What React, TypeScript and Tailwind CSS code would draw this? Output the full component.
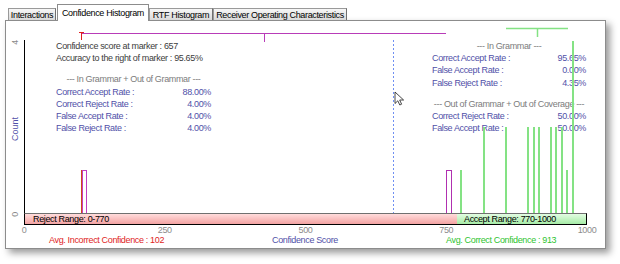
import React from 'react';

// [x in plot px, count]
const correctBars: [number, number][] = [
  [437, 1], [460, 2], [482, 2], [504, 2], [510, 2], [515, 2],
  [527, 2], [532, 2], [538, 2], [543, 1], [549, 4],
];

const BASE = 192;
const UNIT = 43;

function Tab({ label, width }: { label: string; width: string }) {
  return (
    <div
      className={`${width} h-[12px] flex items-center justify-center border border-b-0 border-[#9a9a9a] border-r-[#6f6f6f] bg-linear-to-b from-[#f7f7f7] to-[#d9d9d9] leading-[10px] whitespace-nowrap`}
    >
      {label}
    </div>
  );
}

function Row({ label, value }: { label: string; value: string }) {
  return (
    <div className="flex justify-between text-[#5050a8]">
      <span>{label}</span>
      <span>{value}</span>
    </div>
  );
}

function Chart() {
  return (
    <svg className="absolute inset-0" width={563} height={192} viewBox="0 0 563 192">
      <line x1={0.5} y1={19} x2={0.5} y2={192} stroke="#000" />
      <line x1={369.5} y1={19} x2={369.5} y2={192} stroke="#6f8ff2" strokeDasharray="2 2" />

      {/* incorrect confidence spread */}
      <line x1={58} y1={12.5} x2={422} y2={12.5} stroke="#b83cb8" />
      <line x1={240.5} y1={12.5} x2={240.5} y2={21} stroke="#b83cb8" />
      <line x1={55} y1={11.5} x2={60} y2={11.5} stroke="#e02020" />
      <line x1={57.5} y1={11} x2={57.5} y2={19} stroke="#e02020" />

      {/* correct confidence spread */}
      <line x1={482} y1={7.5} x2={544} y2={7.5} stroke="#84e284" strokeWidth={1.5} />
      <line x1={513.5} y1={7.5} x2={513.5} y2={16} stroke="#84e284" strokeWidth={1.5} />

      {/* incorrect bars */}
      <line x1={57.5} y1={BASE - UNIT} x2={57.5} y2={BASE} stroke="#d0481a" />
      <rect x={58.5} y={BASE - UNIT + 0.5} width={4} height={UNIT} fill="none" stroke="#c23ec2" />
      <rect x={422.5} y={BASE - UNIT + 0.5} width={5} height={UNIT} fill="none" stroke="#b030b0" />

      {/* correct bars */}
      {correctBars.map(([x, c]) => (
        <rect key={x} x={x - 1} y={BASE - c * UNIT} width={2} height={c * UNIT} fill="#84e284" />
      ))}

      {/* mouse cursor */}
      <polygon
        transform="translate(371 71)"
        points="0,0 0,11.5 2.8,8.8 4.8,13 6.6,12.2 4.7,8 8.6,8"
        fill="#fff"
        stroke="#1a1a1a"
        strokeWidth={0.8}
        strokeLinejoin="round"
      />
    </svg>
  );
}

export default function App() {
  return (
    <div className="w-[620px] h-[264px] bg-white overflow-hidden text-[9px] tracking-[-0.35px] text-black [font-family:'Liberation_Sans',Arial,sans-serif]">
      <div className="flex items-end h-[20px] pl-[8px]">
        <Tab label="Interactions" width="w-[48px]" />
        <div className="ml-[1px] w-[92px] h-[17px] -mb-px relative z-10 bg-white border border-b-0 border-[#8c8c8c] flex justify-center pt-[3px] leading-[10px] whitespace-nowrap">
          Confidence Histogram
        </div>
        <Tab label="RTF Histogram" width="w-[64px]" />
        <Tab label="Receiver Operating Characteristics" width="w-[134px]" />
      </div>

      <div className="ml-[5px] w-[601px] h-[229px] border border-[#8c8c8c] bg-white shadow-[4px_4px_7px_rgba(0,0,0,0.4)] flex">
        {/* y axis */}
        <div className="w-[18px] flex flex-col items-center leading-[10px]">
          <span className="mt-[19px] [writing-mode:vertical-rl] rotate-180 text-[#8a8a8a]">4</span>
          <span className="mt-[72px] [writing-mode:vertical-rl] rotate-180 text-[#5050a8] tracking-normal">Count</span>
          <span className="mt-[71px] [writing-mode:vertical-rl] rotate-180 text-[#8a8a8a]">0</span>
        </div>

        <div className="w-[563px] flex flex-col">
          <div className="relative h-[192px] leading-[12.2px] whitespace-nowrap">
            <div className="absolute left-[32px] top-[19px] w-[155px]">
              <div className="text-[#3c3c3c]">Confidence score at marker : 657</div>
              <div className="text-[#3c3c3c]">Accuracy to the right of marker : 95.65%</div>
              <div className="mt-[9px] text-center text-[#7c7c7c]">--- In Grammar + Out of Grammar ---</div>
              <Row label="Correct Accept Rate :" value="88.00%" />
              <Row label="Correct Reject Rate :" value="4.00%" />
              <Row label="False Accept Rate :" value="4.00%" />
              <Row label="False Reject Rate :" value="4.00%" />
            </div>

            <div className="absolute left-[408px] top-[19px] w-[154px]">
              <div className="text-center text-[#7c7c7c]">--- In Grammar ---</div>
              <Row label="Correct Accept Rate :" value="95.65%" />
              <Row label="False Accept Rate :" value="0.00%" />
              <Row label="False Reject Rate :" value="4.35%" />
              <div className="mt-[9px] text-center text-[#7c7c7c]">--- Out of Grammar + Out of Coverage ---</div>
              <Row label="Correct Reject Rate :" value="50.00%" />
              <Row label="False Accept Rate :" value="50.00%" />
            </div>

            <Chart />
          </div>

          <div className="h-[12px] flex border border-black border-t-[#707070] leading-[10px] whitespace-nowrap">
            <div className="w-[432px] bg-linear-to-b from-[#ffdcdc] to-[#f2a3a3] pl-[8px]">Reject Range: 0-770</div>
            <div className="flex-1 bg-linear-to-b from-[#e2fde2] to-[#a6eba6] pl-[7px]">Accept Range: 770-1000</div>
          </div>

          <div className="h-[10px] flex justify-between leading-[10px] text-[#8c8c8c]">
            {['0', '250', '500', '750', '1000'].map((t) => (
              <div key={t} className="w-0 flex justify-center">
                <span>{t}</span>
              </div>
            ))}
          </div>

          <div className="h-[11px] flex leading-[11px] whitespace-nowrap">
            <div className="w-[196px] pl-[25px] text-[#e02424]">Avg. Incorrect Confidence : 102</div>
            <div className="w-[170px] text-center text-[#5050a8]">Confidence Score</div>
            <div className="pl-[56px] text-[#2fc42f]">Avg. Correct Confidence : 913</div>
          </div>
        </div>
      </div>
    </div>
  );
}
